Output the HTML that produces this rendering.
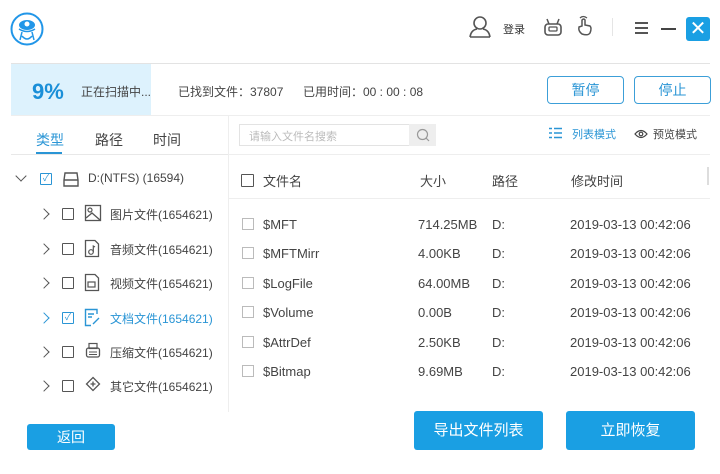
<!DOCTYPE html>
<html><head><meta charset="utf-8"><style>
*{margin:0;padding:0;box-sizing:border-box}
body{width:720px;height:474px;background:#fff;position:relative;overflow:hidden;font-family:"Liberation Sans","Noto Sans CJK SC",sans-serif;color:#444;font-size:13px}
.a{position:absolute;white-space:nowrap}
.cb{position:absolute;width:12px;height:12px;border:1.5px solid #555;border-radius:1px}
.cbl{position:absolute;width:12px;height:12px;border:1px solid #bbb}
.btn{position:absolute;background:#1a9fe3;color:#fff;border-radius:3px;text-align:center}
.ob{position:absolute;border:1px solid #3c9fd8;color:#2a95d5;border-radius:4px;text-align:center;font-size:14px}
.chev{position:absolute;width:8px;height:8px;border-right:1.5px solid #555;border-top:1.5px solid #555;transform:rotate(45deg)}
</style></head><body>
<svg class="a" style="left:10px;top:12px" width="34" height="34" viewBox="0 0 34 34"><circle cx="17" cy="17" r="15.5" fill="none" stroke="#2196e8" stroke-width="2"/><ellipse cx="17" cy="13" rx="8" ry="5" fill="#2196e8"/><circle cx="17" cy="12" r="2.5" fill="#fff"/><path d="M9 17 Q17 22 25 17 M12 20 L10 28 M22 20 L24 28 M12 24 Q17 30 22 24" fill="none" stroke="#2196e8" stroke-width="1.5"/></svg>
<svg class="a" style="left:469px;top:15px" width="22" height="24" viewBox="0 0 22 24"><circle cx="11" cy="8" r="6" fill="none" stroke="#555" stroke-width="1.6"/><path d="M1 22 Q2 15 8 14 M21 22 Q20 15 14 14 M1 22 H21" fill="none" stroke="#555" stroke-width="1.6"/></svg>
<div class="a" style="left:503px;top:21px;font-size:11px;color:#333">登录</div>
<svg class="a" style="left:543px;top:16px" width="20" height="22" viewBox="0 0 20 22"><rect x="2" y="8" width="16" height="11" rx="3" fill="none" stroke="#555" stroke-width="1.6"/><rect x="6" y="11" width="8" height="4" rx="1" fill="none" stroke="#555" stroke-width="1.3"/><path d="M6 8 L4 3 M14 8 L16 3" stroke="#555" stroke-width="1.5"/></svg>
<svg class="a" style="left:575px;top:14px" width="20" height="24" viewBox="0 0 20 24"><path d="M7 20 Q3 17 4 13 L7 12 L7 6 Q9 4 10 6 L10 11 L15 12 Q17 14 15 19 Q13 22 7 20Z" fill="none" stroke="#555" stroke-width="1.5"/><path d="M5 4 Q8 1 12 4" fill="none" stroke="#555" stroke-width="1.3"/></svg>
<div class="a" style="left:612px;top:18px;width:1px;height:18px;background:#e5e5e5"></div>
<div class="a" style="left:635px;top:22px;width:13px;height:2px;background:#555;box-shadow:0 5px 0 #555,0 10px 0 #555"></div>
<div class="a" style="left:661px;top:28px;width:15px;height:2px;background:#444"></div>
<div class="a" style="left:686px;top:17px;width:24px;height:24px;background:#1a9fe3;border-radius:3px;color:#fff;font-size:20px;line-height:24px;text-align:center">✕</div>
<div class="a" style="left:11px;top:63px;width:699px;height:1px;background:#e3e3e3"></div>
<div class="a" style="left:11px;top:64px;width:140px;height:51px;background:#ddf2fd"></div>
<div class="a" style="left:32px;top:79px;font-size:22px;font-weight:bold;color:#1a8fd8">9%</div>
<div class="a" style="left:81px;top:83px;font-size:12px;color:#444">正在扫描中...</div>
<div class="a" style="left:178px;top:83px;font-size:12px;color:#444">已找到文件：37807</div>
<div class="a" style="left:303px;top:83px;font-size:12px;color:#444">已用时间：00 : 00 : 08</div>
<div class="ob" style="left:547px;top:76px;width:77px;height:28px;line-height:26px">暂停</div>
<div class="ob" style="left:634px;top:76px;width:77px;height:28px;line-height:26px">停止</div>
<div class="a" style="left:11px;top:115px;width:699px;height:1px;background:#eee"></div>
<div class="a" style="left:36px;top:130px;font-size:14px;color:#2a95d5">类型</div>
<div class="a" style="left:36px;top:152px;width:26px;height:2px;background:#2a95d5"></div>
<div class="a" style="left:95px;top:130px;font-size:14px;color:#444">路径</div>
<div class="a" style="left:153px;top:130px;font-size:14px;color:#444">时间</div>
<div class="a" style="left:11px;top:154px;width:217px;height:1px;background:#e8e8e8"></div>
<div class="a" style="left:228px;top:116px;width:1px;height:296px;background:#eee"></div>
<div class="chev" style="left:17px;top:172px;transform:rotate(135deg)"></div>
<div class="cb" style="left:40px;top:173px;border-color:#2a95d5;color:#2a95d5;font-size:9px;line-height:9px;text-align:center">✓</div>
<svg class="a" style="left:62px;top:170px" width="18" height="18" viewBox="0 0 18 18"><path d="M3 3 H15 L16 10 V16 H2 V10Z M2 10 H16" fill="none" stroke="#555" stroke-width="1.4"/></svg>
<div class="a" style="left:88px;top:171px;font-size:12px;color:#444">D:(NTFS) (16594)</div>
<div class="chev" style="left:40px;top:210px"></div><div class="cb" style="left:62px;top:208px"></div>
<svg class="a" style="left:84px;top:204px" width="18" height="18" viewBox="0 0 18 18"><rect x="1.5" y="1.5" width="15" height="15" fill="none" stroke="#555" stroke-width="1.3"/><circle cx="6" cy="6" r="2" fill="none" stroke="#555" stroke-width="1.2"/><path d="M2 14 L8 9 L16 16" fill="none" stroke="#555" stroke-width="1.3"/></svg>
<div class="a" style="left:110px;top:206px;font-size:12px;color:#444">图片文件(1654621)</div>
<div class="chev" style="left:40px;top:245px"></div><div class="cb" style="left:62px;top:243px"></div>
<svg class="a" style="left:84px;top:239px" width="16" height="19" viewBox="0 0 16 19"><path d="M1.5 1.5 H11 L14.5 5 V17.5 H1.5Z" fill="none" stroke="#555" stroke-width="1.3"/><circle cx="7" cy="13" r="2.3" fill="none" stroke="#555" stroke-width="1.2"/><path d="M9.3 13 V7 L11 8" fill="none" stroke="#555" stroke-width="1.2"/></svg>
<div class="a" style="left:110px;top:241px;font-size:12px;color:#444">音频文件(1654621)</div>
<div class="chev" style="left:40px;top:279px"></div><div class="cb" style="left:62px;top:277px"></div>
<svg class="a" style="left:84px;top:273px" width="16" height="19" viewBox="0 0 16 19"><path d="M1.5 1.5 H11 L14.5 5 V17.5 H1.5Z" fill="none" stroke="#555" stroke-width="1.3"/><rect x="4" y="9" width="7" height="5" fill="none" stroke="#555" stroke-width="1.2"/></svg>
<div class="a" style="left:110px;top:275px;font-size:12px;color:#444">视频文件(1654621)</div>
<div class="chev" style="left:40px;top:314px;border-color:#2a95d5"></div>
<div class="cb" style="left:62px;top:312px;border-color:#2a95d5;color:#2a95d5;font-size:9px;line-height:9px;text-align:center">✓</div>
<svg class="a" style="left:84px;top:308px" width="17" height="19" viewBox="0 0 17 19"><path d="M13 6 V1.5 H1.5 V17.5 H7" fill="none" stroke="#2a95d5" stroke-width="1.4"/><path d="M4 6 H10 M4 9 H8 M9 16 L15 10" fill="none" stroke="#2a95d5" stroke-width="1.4"/></svg>
<div class="a" style="left:110px;top:310px;font-size:12px;color:#2a95d5">文档文件(1654621)</div>
<div class="chev" style="left:40px;top:348px"></div><div class="cb" style="left:62px;top:346px"></div>
<svg class="a" style="left:85px;top:342px" width="16" height="17" viewBox="0 0 16 17"><rect x="4" y="1.5" width="8" height="5" fill="none" stroke="#555" stroke-width="1.2"/><rect x="1.5" y="6" width="13" height="9" rx="2" fill="none" stroke="#555" stroke-width="1.3"/><path d="M4 10 H12 M4 12.5 H12" stroke="#555"/></svg>
<div class="a" style="left:110px;top:344px;font-size:12px;color:#444">压缩文件(1654621)</div>
<div class="chev" style="left:40px;top:382px"></div><div class="cb" style="left:62px;top:380px"></div>
<svg class="a" style="left:85px;top:376px" width="16" height="16" viewBox="0 0 16 16"><path d="M8 1.5 L14.5 8 L8 14.5 L1.5 8Z" fill="none" stroke="#555" stroke-width="1.3"/><path d="M8 5.5 V10.5 M5.5 8 H10.5" stroke="#555" stroke-width="1.3"/></svg>
<div class="a" style="left:110px;top:378px;font-size:12px;color:#444">其它文件(1654621)</div>
<div class="a" style="left:239px;top:124px;width:197px;height:22px;border:1px solid #e3e3e3"></div>
<div class="a" style="left:409px;top:124px;width:27px;height:22px;background:#eee"></div>
<svg class="a" style="left:416px;top:128px" width="14" height="14" viewBox="0 0 14 14"><circle cx="6.5" cy="6.5" r="5" fill="none" stroke="#999" stroke-width="1.2"/><path d="M10 10 L13 13" stroke="#999" stroke-width="1.2"/></svg>
<div class="a" style="left:249px;top:128px;font-size:11px;color:#bbb">请输入文件名搜索</div>
<svg class="a" style="left:549px;top:127px" width="14" height="12" viewBox="0 0 14 12"><path d="M0 1.5 H3 M0 6 H3 M0 10.5 H3 M5 1.5 H13 M5 6 H13 M5 10.5 H13" stroke="#2a95d5" stroke-width="1.5"/></svg>
<div class="a" style="left:572px;top:126px;font-size:11px;color:#2a95d5">列表模式</div>
<svg class="a" style="left:634px;top:129px" width="14" height="10" viewBox="0 0 14 10"><path d="M1 5 Q7 -2 13 5 Q7 12 1 5Z" fill="none" stroke="#444" stroke-width="1.2"/><circle cx="7" cy="5" r="1.8" fill="none" stroke="#444" stroke-width="1.2"/></svg>
<div class="a" style="left:653px;top:126px;font-size:11px;color:#444">预览模式</div>
<div class="a" style="left:229px;top:154px;width:481px;height:1px;background:#eee"></div>
<div class="cb" style="left:241px;top:174px;width:13px;height:13px"></div>
<div class="a" style="left:263px;top:171px;font-size:13px;color:#444">文件名</div>
<div class="a" style="left:420px;top:171px;font-size:13px;color:#444">大小</div>
<div class="a" style="left:492px;top:171px;font-size:13px;color:#444">路径</div>
<div class="a" style="left:571px;top:171px;font-size:13px;color:#444">修改时间</div>
<div class="a" style="left:707px;top:167px;width:2px;height:18px;background:#ddd"></div>
<div class="a" style="left:229px;top:198px;width:481px;height:1px;background:#eee"></div>
<div class="cbl" style="left:242px;top:218px"></div><div class="a" style="left:263px;top:217px">$MFT</div><div class="a" style="left:418px;top:217px">714.25MB</div><div class="a" style="left:492px;top:217px">D:</div><div class="a" style="left:570px;top:217px">2019-03-13 00:42:06</div>
<div class="cbl" style="left:242px;top:247px"></div><div class="a" style="left:263px;top:246px">$MFTMirr</div><div class="a" style="left:418px;top:246px">4.00KB</div><div class="a" style="left:492px;top:246px">D:</div><div class="a" style="left:570px;top:246px">2019-03-13 00:42:06</div>
<div class="cbl" style="left:242px;top:277px"></div><div class="a" style="left:263px;top:276px">$LogFile</div><div class="a" style="left:418px;top:276px">64.00MB</div><div class="a" style="left:492px;top:276px">D:</div><div class="a" style="left:570px;top:276px">2019-03-13 00:42:06</div>
<div class="cbl" style="left:242px;top:306px"></div><div class="a" style="left:263px;top:305px">$Volume</div><div class="a" style="left:418px;top:305px">0.00B</div><div class="a" style="left:492px;top:305px">D:</div><div class="a" style="left:570px;top:305px">2019-03-13 00:42:06</div>
<div class="cbl" style="left:242px;top:336px"></div><div class="a" style="left:263px;top:335px">$AttrDef</div><div class="a" style="left:418px;top:335px">2.50KB</div><div class="a" style="left:492px;top:335px">D:</div><div class="a" style="left:570px;top:335px">2019-03-13 00:42:06</div>
<div class="cbl" style="left:242px;top:365px"></div><div class="a" style="left:263px;top:364px">$Bitmap</div><div class="a" style="left:418px;top:364px">9.69MB</div><div class="a" style="left:492px;top:364px">D:</div><div class="a" style="left:570px;top:364px">2019-03-13 00:42:06</div>
<div class="btn" style="left:27px;top:424px;width:88px;height:26px;line-height:26px;font-size:14px">返回</div>
<div class="btn" style="left:414px;top:411px;width:129px;height:39px;line-height:39px;font-size:15px">导出文件列表</div>
<div class="btn" style="left:566px;top:411px;width:129px;height:39px;line-height:39px;font-size:15px">立即恢复</div>
</body></html>
